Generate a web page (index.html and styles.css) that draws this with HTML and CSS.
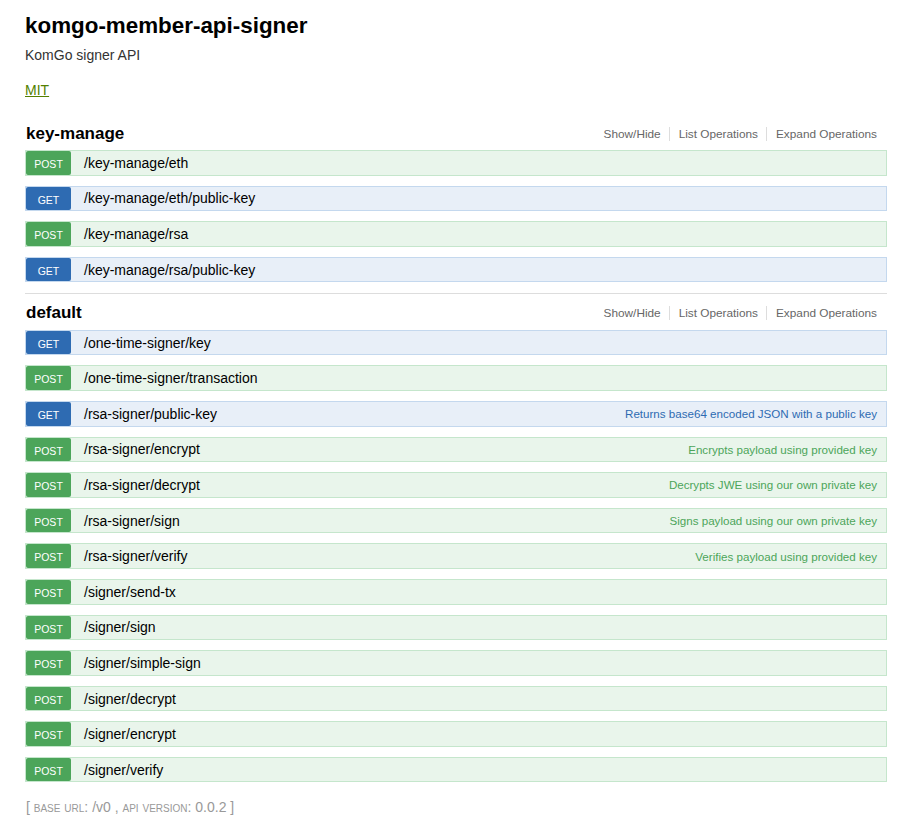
FILE: index.html
```html
<!DOCTYPE html>
<html>
<head>
<meta charset="utf-8">
<link rel="stylesheet" href="styles.css">
</head>
<body>
<div class="wrap">
  <div class="info">
    <h1 class="title">komgo-member-api-signer</h1>
    <p class="desc">KomGo signer API</p>
    <p class="license"><a href="#">MIT</a></p>
  </div>

  <ul class="resources">
    <li class="resource">
      <div class="res-head">
        <h2>key-manage</h2>
        <ul class="options">
          <li>Show/Hide</li>
          <li>List Operations</li>
          <li>Expand Operations</li>
        </ul>
      </div>
      <ul class="ops">
        <li class="op post"><span class="method">post</span><span class="path">/key-manage/eth</span></li>
        <li class="op get"><span class="method">get</span><span class="path">/key-manage/eth/public-key</span></li>
        <li class="op post"><span class="method">post</span><span class="path">/key-manage/rsa</span></li>
        <li class="op get"><span class="method">get</span><span class="path">/key-manage/rsa/public-key</span></li>
      </ul>
    </li>
    <li class="resource">
      <div class="res-head">
        <h2>default</h2>
        <ul class="options">
          <li>Show/Hide</li>
          <li>List Operations</li>
          <li>Expand Operations</li>
        </ul>
      </div>
      <ul class="ops">
        <li class="op get"><span class="method">get</span><span class="path">/one-time-signer/key</span></li>
        <li class="op post"><span class="method">post</span><span class="path">/one-time-signer/transaction</span></li>
        <li class="op get"><span class="method">get</span><span class="path">/rsa-signer/public-key</span><span class="summary">Returns base64 encoded JSON with a public key</span></li>
        <li class="op post"><span class="method">post</span><span class="path">/rsa-signer/encrypt</span><span class="summary">Encrypts payload using provided key</span></li>
        <li class="op post"><span class="method">post</span><span class="path">/rsa-signer/decrypt</span><span class="summary">Decrypts JWE using our own private key</span></li>
        <li class="op post"><span class="method">post</span><span class="path">/rsa-signer/sign</span><span class="summary">Signs payload using our own private key</span></li>
        <li class="op post"><span class="method">post</span><span class="path">/rsa-signer/verify</span><span class="summary">Verifies payload using provided key</span></li>
        <li class="op post"><span class="method">post</span><span class="path">/signer/send-tx</span></li>
        <li class="op post"><span class="method">post</span><span class="path">/signer/sign</span></li>
        <li class="op post"><span class="method">post</span><span class="path">/signer/simple-sign</span></li>
        <li class="op post"><span class="method">post</span><span class="path">/signer/decrypt</span></li>
        <li class="op post"><span class="method">post</span><span class="path">/signer/encrypt</span></li>
        <li class="op post"><span class="method">post</span><span class="path">/signer/verify</span></li>
      </ul>
    </li>
  </ul>

  <div class="footer">[ <span class="sc">base url</span>: /v0 , <span class="sc">api version</span>: 0.0.2 ]</div>
</div>
</body>
</html>
```

FILE: styles.css
```css
* { box-sizing: border-box; }
html, body { margin: 0; padding: 0; background: #fff; }
body { font-family: "Liberation Sans", Arial, Helvetica, sans-serif; color: #000; }
.wrap { width: 862px; margin-left: 25px; padding-top: 13px; }

.title { font-size: 22.4px; font-weight: bold; margin: 0; line-height: 26px; }
.desc { font-size: 14px; color: #333; margin: 7px 0 0; line-height: 18px; }
.license { font-size: 14px; margin: 17px 0 0; line-height: 18px; }
.license a { color: #547f00; text-decoration: underline; }

.resources { list-style: none; margin: 15px 0 0; padding: 0; }
.resource { border-bottom: 1px solid #ddd; }
.resource:last-child { border-bottom: none; }
.res-head { display: flex; justify-content: space-between; align-items: center; height: 36px; padding-top: 3px; }
.res-head h2 { margin: 0; font-size: 17px; font-weight: bold; padding-left: 1px; }
.options { list-style: none; margin: 0; padding: 0; display: flex; font-size: 11.8px; color: #666; }
.options li { padding: 0 8px 0 9px; border-right: 1px solid #ddd; line-height: 14px; }
.options li:last-child { border-right: none; padding-right: 10px; }

.ops { list-style: none; margin: 0; padding: 0 0 0.4px; }
.op { display: flex; align-items: center; height: 25.6px; margin-bottom: 10px; border: 1px solid; }
.op.get { background: #e8eff8; border-color: #c4d8ee; }
.op.post { background: #e9f5eb; border-color: #c5e6cc; }
.method { width: 45px; align-self: stretch; color: #fff; text-transform: uppercase; font-size: 10.5px; text-align: center; border-radius: 2px; padding-top: 7px; line-height: 12px; }
.get .method { background: #2e6bb2; }
.post .method { background: #4ca55a; }
.path { padding-left: 13px; font-size: 14px; flex: 1; }
.summary { font-size: 11.6px; padding-right: 9px; }
.get .summary { color: #2e6bb2; }
.post .summary { color: #4ca55a; }

.footer { color: #999; font-size: 14px; margin-top: 6px; padding-left: 1px; }
.sc { font-variant: small-caps; }
```
